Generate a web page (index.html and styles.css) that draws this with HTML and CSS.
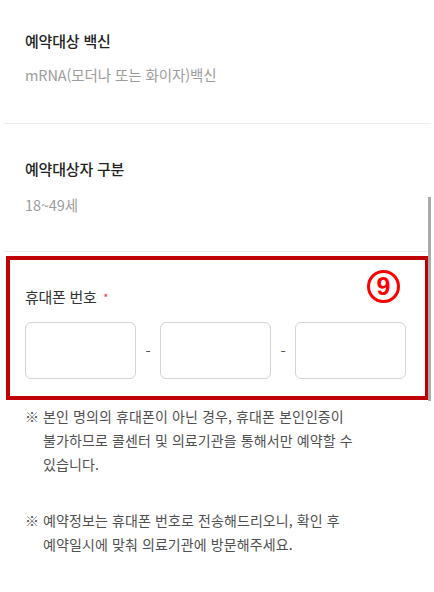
FILE: index.html
```html
<!DOCTYPE html>
<html lang="ko">
<head>
    <meta charset="UTF-8">
    <meta name="viewport" content="width=device-width, initial-scale=1.0">
    <title>예약 정보 입력</title>
    <link rel="stylesheet" href="styles.css">
</head>
<body>
    <div class="page">
        <div class="section">
            <div class="section-title">예약대상 백신</div>
            <div class="section-value">mRNA(모더나 또는 화이자)백신</div>
        </div>

        <div class="section">
            <div class="section-title">예약대상자 구분</div>
            <div class="section-value">18~49세</div>
        </div>

        <div class="phone-section">
            <label class="phone-label">휴대폰 번호 <span class="required">*</span></label>
            <div class="phone-inputs">
                <input type="tel" class="phone-input" maxlength="3">
                <span class="dash">-</span>
                <input type="tel" class="phone-input" maxlength="4">
                <span class="dash">-</span>
                <input type="tel" class="phone-input" maxlength="4">
            </div>

            <ul class="notes">
                <li>※ 본인 명의의 휴대폰이 아닌 경우, 휴대폰 본인인증이<br>불가하므로 콜센터 및 의료기관을 통해서만 예약할 수<br>있습니다.</li>
                <li>※ 예약정보는 휴대폰 번호로 전송해드리오니, 확인 후<br>예약일시에 맞춰 의료기관에 방문해주세요.</li>
            </ul>
        </div>

        <!-- annotation overlay -->
        <div class="highlight-box"></div>
        <div class="step-badge">9</div>
        <div class="scroll-thumb"></div>
    </div>
</body>
</html>
```

FILE: styles.css
```css
body {
    margin: 0;
    padding: 0;
    background: #ffffff;
    font-family: 'Noto Sans CJK KR', 'Noto Sans', sans-serif;
    color: #222222;
}

.page {
    position: relative;
    width: 434px;
    min-height: 592px;
    overflow: hidden;
}

.section {
    margin: 0 3px 0 4px;
    padding: 31px 24px 38px 21px;
    border-bottom: 1px solid #ededf2;
}

.section + .section {
    padding-top: 35px;
    padding-bottom: 36px;
}

.section-title {
    font-size: 15px;
    line-height: 20px;
    font-weight: 500;
    letter-spacing: -0.2px;
    color: #222222;
}

.section-value {
    margin-top: 14px;
    font-size: 14.5px;
    line-height: 20px;
    letter-spacing: -0.1px;
    color: #9c9c9c;
}

.section + .section .section-value {
    margin-top: 16px;
}

.phone-section {
    padding: 35px 28px 40px 25px;
}

.phone-label {
    display: block;
    font-size: 15px;
    line-height: 20px;
    letter-spacing: -0.3px;
    color: #333333;
}

.required {
    color: #e53935;
    font-size: 11px;
    vertical-align: top;
    margin-left: 3px;
}

.phone-inputs {
    display: flex;
    align-items: center;
    margin-top: 15px;
}

.phone-input {
    flex: 1;
    min-width: 0;
    height: 57px;
    box-sizing: border-box;
    border: 1px solid #d3d3d8;
    border-radius: 6px;
    background: #ffffff;
    padding: 0 10px;
    font-size: 15px;
}

.dash {
    width: 24px;
    text-align: center;
    font-size: 15px;
    color: #555555;
}

.notes {
    list-style: none;
    margin: 25px 0 0;
    padding: 0;
}

.notes li {
    padding-left: 18px;
    text-indent: -18px;
    font-size: 14px;
    line-height: 24px;
    letter-spacing: 0.1px;
    color: #505050;
}

.notes li + li {
    margin-top: 32px;
}

.highlight-box {
    position: absolute;
    left: 6px;
    top: 256px;
    width: 423px;
    height: 144px;
    box-sizing: border-box;
    border: 4px solid #c00000;
}

.step-badge {
    position: absolute;
    left: 367px;
    top: 270px;
    width: 33px;
    height: 33px;
    box-sizing: border-box;
    border: 3px solid #ff0000;
    border-radius: 50%;
    color: #ff0000;
    font-family: 'Liberation Sans', Arial, sans-serif;
    font-weight: bold;
    font-size: 25px;
    line-height: 27px;
    text-align: center;
}

.scroll-thumb {
    position: absolute;
    left: 428px;
    top: 197px;
    width: 3px;
    height: 204px;
    background: #aaaaaa;
}
```
